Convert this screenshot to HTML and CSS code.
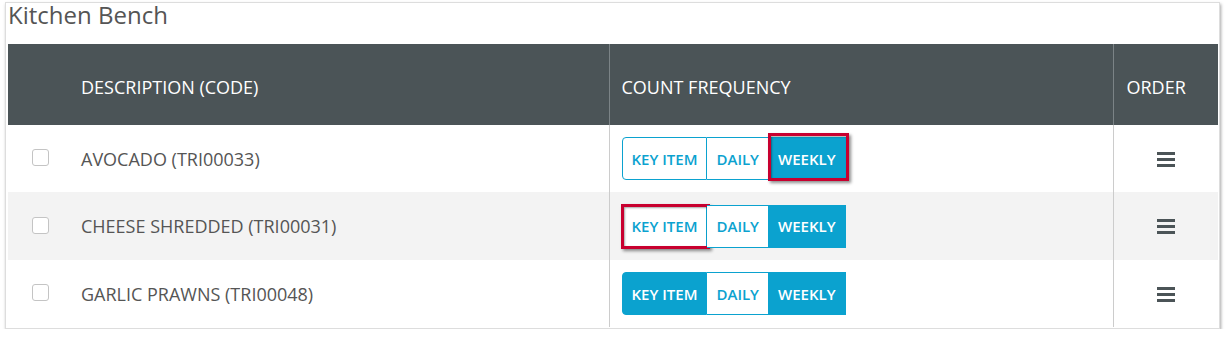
FILE: index.html
```html
<!DOCTYPE html>
<html lang="en">
<head>
    <meta charset="UTF-8">
    <title>Kitchen Bench</title>
    <link rel="stylesheet" href="styles.css">
</head>
<body>
    <div class="panel">
        <h3 class="panel-title">Kitchen Bench</h3>
        <table class="items">
            <thead>
                <tr>
                    <th class="col-check"></th>
                    <th class="col-desc">DESCRIPTION (CODE)</th>
                    <th class="col-freq">COUNT FREQUENCY</th>
                    <th class="col-order">ORDER</th>
                </tr>
            </thead>
            <tbody>
                <tr class="row-a">
                    <td class="col-check"><input type="checkbox" class="check"></td>
                    <td class="col-desc">AVOCADO (TRI00033)</td>
                    <td class="col-freq">
                        <div class="freq-group">
                            <button class="freq-btn">KEY ITEM</button>
                            <button class="freq-btn">DAILY</button>
                            <button class="freq-btn active">WEEKLY<span class="mark mark-a"></span></button>
                        </div>
                    </td>
                    <td class="col-order">
                        <svg class="handle" width="18" height="15" viewBox="0 0 18 15"><rect y="0" width="18" height="3"/><rect y="6" width="18" height="3"/><rect y="12" width="18" height="3"/></svg>
                    </td>
                </tr>
                <tr class="row-b striped">
                    <td class="col-check"><input type="checkbox" class="check"></td>
                    <td class="col-desc">CHEESE SHREDDED (TRI00031)</td>
                    <td class="col-freq">
                        <div class="freq-group">
                            <button class="freq-btn">KEY ITEM<span class="mark mark-b"></span></button>
                            <button class="freq-btn">DAILY</button>
                            <button class="freq-btn active">WEEKLY</button>
                        </div>
                    </td>
                    <td class="col-order">
                        <svg class="handle" width="18" height="15" viewBox="0 0 18 15"><rect y="0" width="18" height="3"/><rect y="6" width="18" height="3"/><rect y="12" width="18" height="3"/></svg>
                    </td>
                </tr>
                <tr class="row-c">
                    <td class="col-check"><input type="checkbox" class="check"></td>
                    <td class="col-desc">GARLIC PRAWNS (TRI00048)</td>
                    <td class="col-freq">
                        <div class="freq-group">
                            <button class="freq-btn active">KEY ITEM</button>
                            <button class="freq-btn">DAILY</button>
                            <button class="freq-btn active">WEEKLY</button>
                        </div>
                    </td>
                    <td class="col-order">
                        <svg class="handle" width="18" height="15" viewBox="0 0 18 15"><rect y="0" width="18" height="3"/><rect y="6" width="18" height="3"/><rect y="12" width="18" height="3"/></svg>
                    </td>
                </tr>
            </tbody>
        </table>
    </div>
</body>
</html>
```

FILE: styles.css
```css
body {
    font-family: "Open Sans", "Liberation Sans", sans-serif;
    background-color: #ffffff;
    color: #555555;
    margin: 0;
    padding: 0;
}

.panel {
    width: 1209px;
    margin: 2px 0 0 5px;
    padding: 0 2px 1px 2px;
    background-color: white;
    border: 1px solid #dddddd;
    box-shadow: 1px 2px 3px rgba(0, 0, 0, 0.35);
}

.panel-title {
    margin: 0 0 17px 0;
    font-size: 24px;
    font-weight: normal;
    line-height: 24px;
    color: #555555;
}

.items {
    width: 1210px;
    border-collapse: collapse;
    table-layout: fixed;
}

.items th {
    height: 81px;
    padding: 4px 13px 0 13px;
    background-color: #4b5457;
    color: white;
    font-size: 18px;
    font-weight: normal;
    text-align: left;
    box-sizing: border-box;
}

.items td {
    padding: 0 13px;
    font-size: 18px;
    box-sizing: border-box;
}

.items th.col-freq,
.items th.col-order {
    border-left: 1px solid #7b8386;
}

.items td.col-freq,
.items td.col-order {
    border-left: 1px solid #cccccc;
}

.items th.col-freq,
.items td.col-freq {
    padding-left: 12px;
}

.col-check {
    width: 60px;
}

.items td.col-check,
.items th.col-check {
    padding: 0 0 0 24px;
}

.col-desc {
    width: 541px;
}

.col-freq {
    width: 504px;
}

.col-order {
    width: 105px;
}

.items td.col-order {
    text-align: center;
    padding: 2px 0 0 0;
}

.row-a td { height: 67px; }
.row-b td { height: 68px; }
.row-c td { height: 67px; }

.striped td {
    background-color: #f3f3f3;
}

.check {
    appearance: none;
    display: block;
    width: 17px;
    height: 17px;
    margin: 0 0 2px 0;
    border: 1px solid #c4c4c4;
    border-radius: 3px;
    background-color: white;
}

.freq-group {
    display: flex;
    width: max-content;
}

.freq-btn {
    position: relative;
    height: 43px;
    padding: 0 9px;
    border: 1px solid #0ba2cf;
    border-left: none;
    background-color: white;
    color: #0ba2cf;
    font-family: "Open Sans", "Liberation Sans", sans-serif;
    font-size: 15px;
    font-weight: 600;
}

.freq-btn:first-child {
    border-left: 1px solid #0ba2cf;
    border-radius: 4px 0 0 4px;
}

.freq-btn.active {
    background-color: #0ba2cf;
    color: white;
}

.handle {
    fill: #4b5457;
}

/* annotation boxes drawn over the buttons */
.mark {
    position: absolute;
    border: 3px solid #c8002f;
    box-shadow: 2px 2px 3px rgba(0, 0, 0, 0.45), inset 1px 1px 2px rgba(0, 0, 0, 0.35);
}

.mark-a {
    top: -5px;
    left: -1px;
    right: -4px;
    bottom: -2px;
}

.mark-b {
    top: -2px;
    left: -2px;
    right: -4px;
    bottom: -2px;
}
```
